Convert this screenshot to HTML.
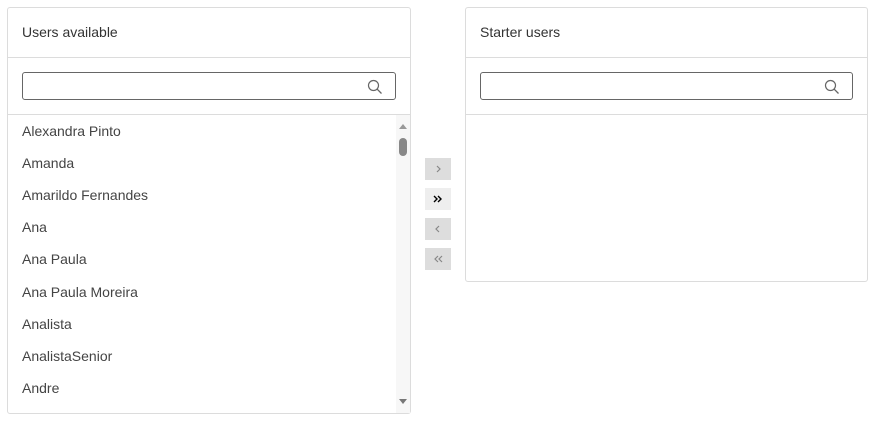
<html><head><style>
body{margin:0;width:879px;height:422px;background:#fff;font-family:"Liberation Sans",sans-serif;position:relative;overflow:hidden}
.p{position:absolute;border:1px solid #dcdcdc;border-radius:3px;box-sizing:border-box;background:#fff}
.h{position:absolute;left:0;right:0;top:0;height:50px;border-bottom:1px solid #dcdcdc;font-size:14px;color:#333;padding:16px 0 0 14px;box-sizing:border-box}
.in{position:absolute;left:14px;right:14px;top:64px;height:28px;border:1px solid #666;border-radius:3px;box-sizing:border-box}
.in svg{position:absolute;right:12px;top:6px}
.d{position:absolute;left:0;right:0;top:106px;border-top:1px solid #dcdcdc}
.it{position:absolute;left:14px;font-size:14px;color:#444}
.b{position:absolute;left:425px;width:26px;height:22px;background:#ddd}
.b svg{position:absolute;left:8px;top:6px}
</style></head><body>
<div class="p" style="left:7px;top:7px;width:404px;height:407px">
<div class="h">Users available</div>
<div class="in"><svg width="16" height="16" viewBox="0 0 16 16"><circle cx="6.5" cy="6.5" r="5" fill="none" stroke="#666" stroke-width="1.2"/><path d="M10.2 10.2L14.5 14.5" stroke="#666" stroke-width="1.3"/></svg></div>
<div class="d"></div>
<div style="position:absolute;left:388px;top:107px;width:14px;bottom:0;background:#f7f7f7"></div>
<div style="position:absolute;left:391px;top:116px;width:0;height:0;border-left:4px solid transparent;border-right:4px solid transparent;border-bottom:5px solid #999"></div>
<div style="position:absolute;left:391px;top:130px;width:8px;height:18px;border-radius:4px;background:#888"></div>
<div style="position:absolute;left:391px;bottom:9px;width:0;height:0;border-left:4px solid transparent;border-right:4px solid transparent;border-top:5px solid #777"></div>
<div class="it" style="top:115px">Alexandra Pinto</div>
<div class="it" style="top:147px">Amanda</div>
<div class="it" style="top:179px">Amarildo Fernandes</div>
<div class="it" style="top:211px">Ana</div>
<div class="it" style="top:243px">Ana Paula</div>
<div class="it" style="top:276px">Ana Paula Moreira</div>
<div class="it" style="top:308px">Analista</div>
<div class="it" style="top:340px">AnalistaSenior</div>
<div class="it" style="top:372px">Andre</div>
</div>
<div class="b" style="top:158px"><svg width="10" height="10" viewBox="0 0 10 10"><path d="M4 2L7 5L4 8" fill="none" stroke="#888" stroke-width="1.2"/></svg></div>
<div class="b" style="top:188px;background:#eee"><svg width="10" height="10" viewBox="0 0 10 10"><path d="M1 2L4 5L1 8M5 2L8 5L5 8" fill="none" stroke="#000" stroke-width="1.4"/></svg></div>
<div class="b" style="top:218px"><svg width="10" height="10" viewBox="0 0 10 10"><path d="M6 2L3 5L6 8" fill="none" stroke="#888" stroke-width="1.2"/></svg></div>
<div class="b" style="top:248px"><svg width="10" height="10" viewBox="0 0 10 10"><path d="M5 2L2 5L5 8M9 2L6 5L9 8" fill="none" stroke="#888" stroke-width="1.2"/></svg></div>
<div class="p" style="left:465px;top:7px;width:403px;height:275px">
<div class="h">Starter users</div>
<div class="in"><svg width="16" height="16" viewBox="0 0 16 16"><circle cx="6.5" cy="6.5" r="5" fill="none" stroke="#666" stroke-width="1.2"/><path d="M10.2 10.2L14.5 14.5" stroke="#666" stroke-width="1.3"/></svg></div>
<div class="d"></div>
</div>
</body></html>
